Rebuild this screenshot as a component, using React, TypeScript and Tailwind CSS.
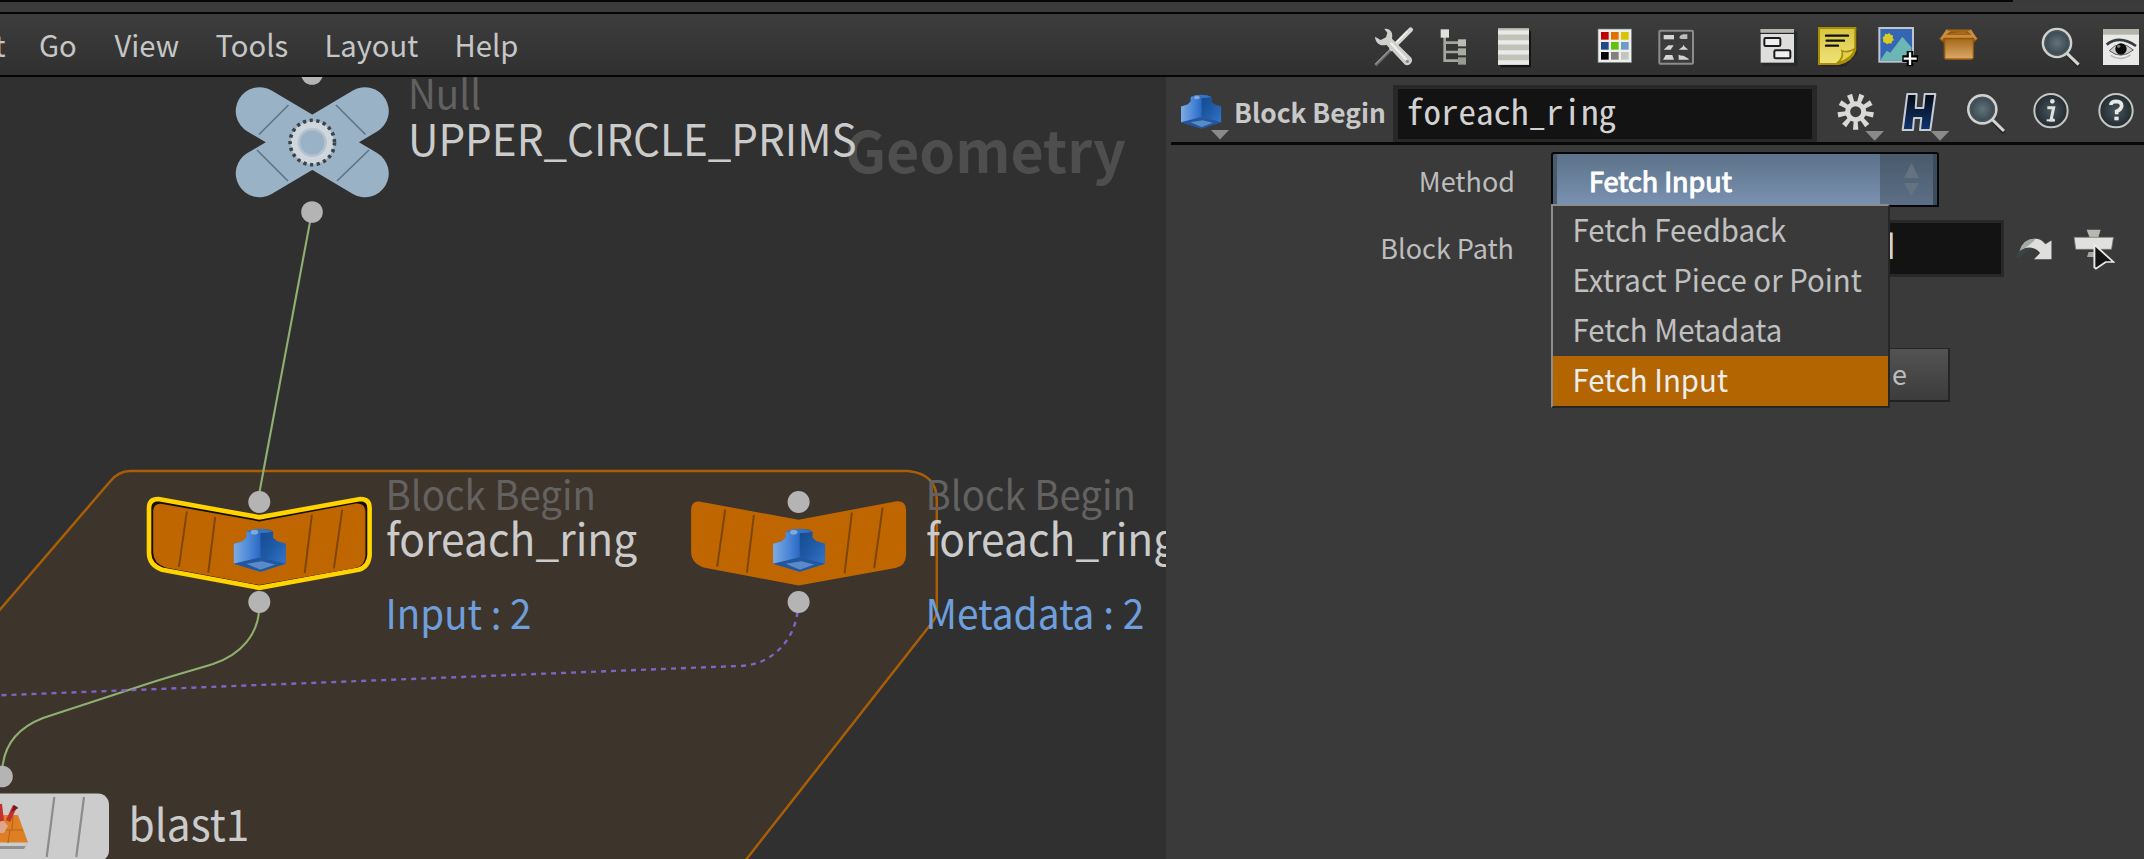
import React from "react";

const SANS = "font-['Noto_Sans_CJK_SC','Noto_Sans',sans-serif]";

/* ---------- toolbar icons ---------- */

type IconProps = { box: string; className: string; children: React.ReactNode };

function Icon({ box, className, children }: IconProps) {
  return (
    <svg viewBox={box} className={`shrink-0 overflow-visible ${className}`}>
      {children}
    </svg>
  );
}

function ToolsIcon() {
  return (
    <Icon box="66 75 129 132" className="h-[44px] w-[43px]">
      <path d="M76 196 L132 140" stroke="#666" strokeWidth="9" />
      <path d="M76 193 L132 137" stroke="#94948f" strokeWidth="4" />
      <path d="M125 146 L182 89" stroke="#d6d6d2" strokeWidth="14" strokeLinecap="round" />
      <path d="M128 139 L172 94" stroke="#f2f2f0" strokeWidth="4" />
      <path
        d="M103 87 C120 84 130 98 126 116 L184 173 C191 186 178 200 165 194 L109 134 C92 140 76 130 75 110 L92 120 L108 112 L112 98 Z"
        fill="#cfcfcb"
      />
      <path d="M122 128 L170 180" stroke="#efefec" strokeWidth="7" />
      <circle cx="172" cy="184" r="5" fill="#8a8a86" />
    </Icon>
  );
}

function TreeIcon() {
  return (
    <Icon box="264 75 93 132" className="h-[44px] w-[31px]">
      <path d="M284 108 V182 H326 M284 128 H326 M284 156 H326" fill="none" stroke="#a3a89c" strokeWidth="8" />
      <rect x="272" y="88" width="25" height="25" fill="#e0e2dd" />
      <rect x="324" y="118" width="24" height="21" fill="#b9bdb4" />
      <rect x="324" y="145" width="24" height="21" fill="#a7aba2" />
      <rect x="324" y="172" width="24" height="22" fill="#969a91" />
    </Icon>
  );
}

function ListIcon() {
  return (
    <Icon box="438 75 108 132" className="h-[44px] w-[36px]">
      <path d="M452 92 H543 V202 H452 Z" fill="#151515" />
      <rect x="444" y="86" width="93" height="109" fill="#c1c3b8" />
      <path d="M444 97 H537 M444 127 H537 M444 157 H537 M444 187 H537" stroke="#eaebe8" strokeWidth="15" transform="translate(0 -1)" />
      <path d="M444 90 H537 M444 119 H537 M444 149 H537 M444 179 H537" stroke="#c1c3b8" strokeWidth="7" transform="translate(0 -2)" />
    </Icon>
  );
}

function PaletteIcon() {
  const colors = ["#c00000", "#e07000", "#d9c400", "#204a87", "#62c010", "#6f9bc8", "#000000", "#80837d", "#c3c6bd"];
  return (
    <Icon box="741 75 108 132" className="h-[44px] w-[36px]">
      <rect x="744" y="87" width="101" height="101" fill="#eeeeec" stroke="#6b7c80" strokeWidth="2" />
      {colors.map((c, i) => (
        <rect key={c} x={753 + (i % 3) * 30} y={96 + Math.floor(i / 3) * 30} width="23" height="23" fill={c} />
      ))}
    </Icon>
  );
}

function ShapesIcon() {
  return (
    <Icon box="921 75 114 132" className="h-[44px] w-[38px]">
      <rect x="928" y="92" width="101" height="99" fill="#3b3b3b" stroke="#8c8c8c" strokeWidth="6" rx="3" />
      <rect x="941" y="105" width="31" height="13" fill="#d5d5d3" />
      <path d="M988 111 q4 -9 14 -8 h10 v14 h-18 q-6 0 -6 -6z" fill="#bdbdbb" />
      <path d="M941 149 l14 -13 h16 l-9 13z" fill="#d5d5d3" />
      <path d="M986 149 l12 -9 2 -6 4 6 11 9z" fill="#d5d5d3" />
      <path d="M939 179 l8 -14 h20 l5 14z" fill="#d5d5d3" />
      <path d="M986 179 v-15 q8 4 14 3 l16 9 v3z" fill="#d5d5d3" />
    </Icon>
  );
}

function NetBoxIcon() {
  return (
    <Icon box="57 75 120 132" className="h-[44px] w-[40px]">
      <rect x="68" y="94" width="104" height="103" fill="#252b2b" />
      <rect x="62" y="87" width="100" height="101" fill="#dededd" />
      <rect x="62" y="87" width="100" height="11" fill="#b4b7ae" />
      <path d="M60 100 H164" stroke="#20262a" strokeWidth="4" />
      <g fill="#efefef" stroke="#1c1c1c" strokeWidth="6">
        <rect x="73" y="114" width="48" height="24" rx="4" />
        <rect x="103" y="151" width="48" height="24" rx="4" />
      </g>
    </Icon>
  );
}

function NoteIcon() {
  return (
    <Icon box="231 75 123 132" className="h-[44px] w-[41px]">
      <defs>
        <linearGradient id="note" x1="0" y1="0" x2="0" y2="1">
          <stop offset="0" stopColor="#d8c53c" />
          <stop offset="1" stopColor="#f0e27c" />
        </linearGradient>
      </defs>
      <path d="M244 92 H352 V160 L316 200 H244Z" fill="#222" opacity=".7" />
      <path d="M237 84 H346 V150 Q338 182 296 192 H237Z" fill="url(#note)" stroke="#a68d08" strokeWidth="6" />
      <path d="M290 190 Q312 176 306 152 Q324 160 344 146 Q338 176 290 190Z" fill="#e3d04c" stroke="#a68d08" strokeWidth="5" />
      <path d="M258 107 H324 M260 122 H312 M258 137 H294" stroke="#111" strokeWidth="7" strokeLinecap="round" />
    </Icon>
  );
}

function ImageIcon() {
  return (
    <Icon box="411 75 129 132" className="h-[44px] w-[43px]">
      <rect x="418" y="84" width="101" height="101" fill="#3566b4" stroke="#bfc5cf" strokeWidth="6" />
      <path d="M423 178 L440 152 L451 158 L487 110 L514 142 V182 H423Z" fill="#6cb6b4" />
      <path d="M428 112 l6 -4 1 -7 7 2 6 -4 4 6 7 1 -1 8 4 6 -6 4 -2 7 -7 -1 -6 3 -5 -5 -7 -2 1 -7z" fill="#dccb22" />
      <path d="M510 153 V199 M487 176 H534" stroke="#000" strokeWidth="20" />
      <path d="M510 157 V195 M491 176 H530" stroke="#fff" strokeWidth="7" />
    </Icon>
  );
}

function CrateIcon() {
  return (
    <Icon box="594 75 126 132" className="h-[44px] w-[42px]">
      <defs>
        <linearGradient id="crate" x1="0" y1="0" x2="0" y2="1">
          <stop offset="0" stopColor="#a86c1c" />
          <stop offset="1" stopColor="#d9a766" />
        </linearGradient>
      </defs>
      <path d="M622 88 H690 L714 116 L702 128 V172 Q700 180 690 180 H622 Q612 180 611 172 V128 L597 117Z" fill="#8f5810" />
      <path d="M625 92 H687 L706 113 H606Z" fill="#cf8c38" />
      <path d="M632 94 H682 L694 104 H618Z" fill="#8c5510" />
      <path d="M636 99 L672 94 L690 103 H626Z" fill="#a56a20" />
      <rect x="616" y="118" width="82" height="57" fill="url(#crate)" />
      <path d="M622 90 L604 118 M690 90 L708 118" stroke="#c88c42" strokeWidth="7" />
    </Icon>
  );
}

function MagnifierArt({ id, x, y }: { id: string; x: number; y: number }) {
  return (
    <g transform={`translate(${x} ${y})`}>
      <defs>
        <radialGradient id={id}>
          <stop offset="0" stopColor="#62737c" />
          <stop offset="1" stopColor="#34414a" />
        </radialGradient>
      </defs>
      <path d="M32 36 L66 70" stroke="#262626" strokeWidth="13" />
      <path d="M30 31 L65 65" stroke="#d4d4d2" strokeWidth="9" />
      <circle r="42" fill={`url(#${id})`} stroke="#d0d1cf" strokeWidth="8" />
      <circle r="36" fill="none" stroke="#4a565d" strokeWidth="4" />
    </g>
  );
}

function EyeIcon() {
  return (
    <Icon box="1083 75 120 132" className="h-[44px] w-[40px]">
      <rect x="1089" y="87" width="108" height="108" fill="#e9e9e8" />
      <rect x="1089" y="87" width="108" height="17" fill="#b4b5ab" />
      <path d="M1100 134 Q1138 104 1188 138" fill="none" stroke="#333b40" strokeWidth="8" />
      <path d="M1108 152 Q1140 114 1180 150 Q1142 180 1108 152Z" fill="#c9caca" stroke="#5c6063" strokeWidth="3" />
      <circle cx="1143" cy="147" r="17" fill="#0b0b0b" />
      <circle cx="1136" cy="139" r="5" fill="#777" />
      <path d="M1112 166 Q1142 186 1172 164" fill="none" stroke="#b5b5b5" strokeWidth="4" />
    </Icon>
  );
}

/* ---------- parameter header icons ---------- */

function GearIcon() {
  return (
    <Icon box="285 270 150 153" className="h-[51px] w-[50px]">
      <g transform="translate(347 332)">
        {[0, 1, 2, 3, 4, 5, 6, 7, 8].map((i) => (
          <path key={i} d="M-6 -28 L-8 -54 H8 L6 -28Z" fill="#d9d9d6" transform={`rotate(${i * 40 + 20})`} />
        ))}
        <circle r="24" fill="#3c3c3c" stroke="#d9d9d6" strokeWidth="15" />
      </g>
      <path d="M376 390 H432 L404 419Z" fill="#8a8a8a" />
    </Icon>
  );
}

function HoudiniIcon() {
  return (
    <Icon box="480 270 150 153" className="h-[51px] w-[50px]">
      <defs>
        <linearGradient id="hmark" x1="0" y1="0" x2="0" y2="1">
          <stop offset="0" stopColor="#050b14" />
          <stop offset="1" stopColor="#10356f" />
        </linearGradient>
      </defs>
      <path
        d="M502 279 H530 L527 321 H550 L554 279 H586 L571 387 H540 L544 351 H522 L519 387 H488 Z"
        fill="url(#hmark)"
        stroke="#c6ccd3"
        strokeWidth="6"
        strokeLinejoin="round"
      />
      <path d="M572 390 H628 L600 419Z" fill="#8a8a8a" />
    </Icon>
  );
}

function RoundBadge({ cx, id, children }: { cx: number; id: string; children: React.ReactNode }) {
  return (
    <Icon box={`${cx - 57} 270 114 153`} className="h-[51px] w-[38px]">
      <defs>
        <radialGradient id={id}>
          <stop offset="0" stopColor="#46555e" />
          <stop offset="1" stopColor="#222b30" />
        </radialGradient>
      </defs>
      <circle cx={cx} cy="329" r="50" fill={`url(#${id})`} stroke="#c4c6c2" strokeWidth="6" />
      {children}
    </Icon>
  );
}

/* Blue block, drawn in a 156 x 130 space */
function BlockArt() {
  return (
    <g>
      <path d="M0 46 L26 38 L38 26 V10 Q80 -8 118 10 V28 L130 38 L156 46 V106 L80 130 L0 106Z" fill="#2f6dc0" />
      <path d="M0 46 L26 38 L38 26 V10 Q58 0 80 2 V90 L0 106Z" fill="url(#blockL)" />
      <path d="M80 2 Q105 0 118 10 V28 L130 38 L156 46 V106 L80 86Z" fill="url(#blockR)" />
      <path d="M38 10 Q80 -8 118 10 Q80 18 38 10Z" fill="#3474c0" />
      <ellipse cx="62" cy="11" rx="11" ry="7" fill="#a9cdf0" opacity=".6" />
      <path d="M0 106 L80 86 L156 106 L80 130Z" fill="#22579f" />
      <path d="M38 106 L84 98 L124 108 L80 124Z" fill="#6d9bd4" opacity=".75" />
    </g>
  );
}

function BlockIcon() {
  return (
    <svg viewBox="1180 93 50 49" className="ml-[14px] h-[49px] w-[50px] shrink-0">
      <g transform="translate(1181 94.5) scale(.257 .262)">
        <BlockArt />
      </g>
      <path d="M1211 130 H1229 L1220 139.5Z" fill="#8a8a8a" />
    </svg>
  );
}

/* ---------- node graph ---------- */

function BlockNode({ cx, selected }: { cx: number; selected?: boolean }) {
  const body =
    "M-99.5 501.5 L0 519.8 L98 501.2 Q107.5 500.5 107.5 510 V555 Q107 566 97 568 L0 585.5 L-95 567.5 Q-107.5 563 -107.5 552 V510 Q-107.5 501 -99.5 501.5Z";
  const ring =
    "M-101 499 L0 517.3 L101 499 Q110.3 499 110.3 508 V555 Q109.5 567 99 569.8 L0 587.8 L-97 569.8 Q-110.3 565 -110.3 553 V508 Q-110.3 499 -101 499Z";
  return (
    <g transform={`translate(${cx} 0)`}>
      {selected && <path d={ring} fill="#140e04" stroke="#ffd400" strokeWidth="4.6" />}
      <g transform={selected ? "translate(0 543.7) scale(.987 .968) translate(0 -542.8)" : undefined}>
        <path d={body} fill="#c06600" />
        <path
          d="M-73.4 509.3 L-81.4 566.7 M-44.7 515 L-51.7 572.7 M53.3 512.7 L46 573.3 M84 507.7 L75.6 568.3"
          stroke="#7d4605"
          strokeWidth="2"
        />
      </g>
      <g transform="translate(-25.5 528.5) scale(.333)">
        <BlockArt />
      </g>
      <circle cy="502" r="11" fill="#b4b4b4" />
      <circle cy="602" r="11" fill="#b4b4b4" />
    </g>
  );
}

function Graph() {
  return (
    <section className={`relative w-[1166px] shrink-0 overflow-hidden bg-[#303030] leading-none ${SANS}`}>
      <svg viewBox="0 77 1166 782" className="block h-[782px] w-[1166px]">
        <defs>
          <linearGradient id="blockL" x1="0" y1=".5" x2="1" y2=".5">
            <stop offset="0" stopColor="#7fabe2" />
            <stop offset=".6" stopColor="#4a86d6" />
            <stop offset="1" stopColor="#2a68c4" />
          </linearGradient>
          <linearGradient id="blockR" x1="0" y1="0" x2="1" y2="1">
            <stop offset="0" stopColor="#154a8c" />
            <stop offset=".5" stopColor="#1f5aa6" />
            <stop offset="1" stopColor="#3474c8" />
          </linearGradient>
        </defs>
        <path
          d="M-20 633 L110.5 481 Q119 471 130 471 H908 Q936.8 474 936.8 500 V612 Q936.5 618 929 626.5 L745 861 H-20Z"
          fill="#3d342b"
          stroke="#a95e06"
          strokeWidth="2.5"
        />
        <g fill="none" stroke="#8fb070" strokeWidth="2.1">
          <path d="M310 222 L259.5 492" />
          <path d="M259 612 C257 633 243 654 213 664 C190 671 170 676.5 150 683 L43 718 C20 727 5 742 2.5 767" />
        </g>
        <path d="M797.5 612 C794 640 772 666 738 666 L0 695.3" fill="none" stroke="#8461c2" strokeWidth="2.4" strokeDasharray="5 5" />

        <circle cx="312" cy="74" r="10.8" fill="#b4b4b4" />
        <g stroke="#9ab2c6" strokeWidth="47.5" strokeLinecap="round">
          <path d="M259.5 111 L365 173.5" />
          <path d="M365 111 L259.5 173.5" />
        </g>
        <path
          d="M288.5 105 L259 134.5 M257 150 L288 181 M336 105 L365.5 134.5 M369 150 L337 181"
          stroke="#5f7385"
          strokeWidth="1.6"
        />
        <circle cx="312.3" cy="142.5" r="17.5" fill="none" stroke="#cfd6dc" strokeWidth="8" />
        <circle cx="312.3" cy="142.5" r="13.3" fill="none" stroke="#b2c2d0" strokeWidth="2.5" />
        <circle cx="312.3" cy="142.5" r="22.2" fill="none" stroke="#3b434a" strokeWidth="3.6" strokeDasharray="3.2 3.55" />
        <circle cx="312" cy="212" r="10.8" fill="#b4b4b4" />

        <BlockNode cx={259.3} selected />
        <BlockNode cx={798.6} />

        <circle cx="2" cy="776.5" r="10.8" fill="#b4b4b4" />
        <rect x="-120" y="793.5" width="229" height="68" rx="11" fill="#cccccc" />
        <path d="M54.3 797 L46.7 857 M84 797 L76.3 857" stroke="#8c8c8c" strokeWidth="2.2" />
        <path d="M0 846 H26 L28 842 L24 849 H0Z" fill="#909090" />
        <path d="M-8 815 H18 L28 842.5 H-18Z" fill="#dd7f22" />
        <path d="M0 830 H23 M8 843 L10 830 M12 830 L13 816" stroke="#b8661a" strokeWidth="1.2" />
        <path d="M-4 825 L3 820 L8 826 L4 833 H-4Z" fill="#dba98a" />
        <path d="M8 821 L15 806" stroke="#c43030" strokeWidth="4.5" />
        <path d="M11 812 L14 805 L18.5 808Z" fill="#7c1818" />
        <path d="M2 821 L0 804" stroke="#c43030" strokeWidth="4" />
      </svg>

      <span className="absolute top-[43px] left-[845px] text-[57.3px] font-bold whitespace-nowrap text-[#4e4e4e]">Geometry</span>
      <span className="absolute top-[-4px] left-[408px] origin-[0_93%] scale-y-[1.05] text-[38.5px] text-[#616161]">Null</span>
      <span className="absolute top-[40px] left-[408px] origin-[0_93%] scale-y-[1.03] text-[42.2px] whitespace-nowrap text-[#cbcbcb]">UPPER_CIRCLE_PRIMS</span>

      <span className="absolute top-[397px] left-[385.5px] origin-[0_93%] scale-y-[1.05] text-[38.4px] whitespace-nowrap text-[#646260]">Block Begin</span>
      <span className="absolute top-[440px] left-[386px] origin-[0_93%] scale-y-[1.03] text-[42.5px] whitespace-nowrap text-[#cbcbcb]">foreach_ring</span>
      <span className="absolute top-[516px] left-[385.5px] origin-[0_93%] scale-y-[1.05] text-[38.5px] whitespace-nowrap text-[#6e9fdc]">Input : 2</span>

      <span className="absolute top-[397px] left-[925.5px] origin-[0_93%] scale-y-[1.05] text-[38.4px] whitespace-nowrap text-[#646260]">Block Begin</span>
      <span className="absolute top-[440px] left-[926px] origin-[0_93%] scale-y-[1.03] text-[42.5px] whitespace-nowrap text-[#cbcbcb]">foreach_ring</span>
      <span className="absolute top-[516px] left-[925.5px] origin-[0_93%] scale-y-[1.05] text-[38.8px] whitespace-nowrap text-[#6e9fdc]">Metadata : 2</span>

      <span className="absolute top-[725px] left-[128.5px] origin-[0_93%] scale-y-[1.03] text-[42.5px] whitespace-nowrap text-[#cbcbcb]">blast1</span>
    </section>
  );
}

/* ---------- parameter pane ---------- */

function ParamHeader() {
  return (
    <header className="flex h-[65px] items-end">
      <BlockIcon />
      <span className="mb-[15px] ml-[4px] w-[159px] text-[26.3px] leading-[30px] font-bold whitespace-nowrap text-[#c8c8c8]">
        Block Begin
      </span>
      <div className="h-[57px] w-[424px] border-x-[5px] border-t-[4px] border-b-[3px] border-[#282828] bg-[#131313] pl-[8px] font-['Noto_Sans_Mono_CJK_SC','DejaVu_Sans_Mono',monospace] text-[35px] leading-[42px] whitespace-nowrap text-[#d2d2d2]">
        foreach_ring
      </div>
      <div className="ml-auto flex pr-[9px]">
        <GearIcon />
        <div className="ml-[15px] flex">
          <HoudiniIcon />
        </div>
        <div className="ml-[15px] flex">
          <Icon box="675 270 123 153" className="h-[51px] w-[41px]">
            <MagnifierArt id="mag2" x={727} y={325} />
          </Icon>
        </div>
        <div className="ml-[26px] flex">
          <RoundBadge cx={933} id="info">
            <circle cx="937" cy="301" r="7" fill="#e2e2df" />
            <path d="M922 320 H941 L933 357 H943" fill="none" stroke="#e2e2df" strokeWidth="9" />
            <path d="M920 358 H945" stroke="#e2e2df" strokeWidth="6" />
          </RoundBadge>
        </div>
        <div className="ml-[27px] flex">
          <RoundBadge cx={1128} id="help">
            <path d="M1112 312 Q1114 301 1129 301 Q1145 302 1145 315 Q1144 325 1130 331 V340" fill="none" stroke="#e8e8e6" strokeWidth="11" />
            <rect x="1123" y="347" width="13" height="11" fill="#e8e8e6" />
          </RoundBadge>
        </div>
      </div>
    </header>
  );
}

function MethodMenu() {
  const items = ["Fetch Feedback", "Extract Piece or Point", "Fetch Metadata", "Fetch Input"];
  return (
    <ul className="absolute top-[52px] left-0 z-10 w-[339px] border-t-[2.5px] border-r-2 border-b-2 border-l-[2.5px] border-t-[#8c8c8c] border-r-[#262626] border-b-[#262626] border-l-[#8c8c8c] bg-[#3a3a3a] text-[29.4px]">
      {items.map((item) => (
        <li
          key={item}
          className={`h-[50px] pl-[19.5px] leading-[46px] whitespace-nowrap ${
            item === "Fetch Input" ? "bg-[#b26500] text-[#ededed]" : "text-[#c0c0c0]"
          }`}
        >
          <span className="inline-block origin-[0_73%] scale-y-[1.05]">{item}</span>
        </li>
      ))}
    </ul>
  );
}

function Params() {
  return (
    <div className="grid grid-cols-[385px_1fr] text-[27px] text-[#bdbdbd]">
      <label className="mt-[7px] h-[55px] pr-[36px] text-right leading-[58px]">Method</label>
      <div className="relative mt-[7px] h-[55px] w-[388px]">
        <div className="flex h-full rounded-t-[3px] border-2 border-[#060708] bg-[#4a5b6d]">
          <div className="ml-[4px] w-[323px] bg-linear-to-b from-[#5c7289] to-[#7a92b1] pl-[32px] leading-[53px] text-white [-webkit-text-stroke:1.1px_white]">
            Fetch Input
          </div>
          <div className="flex flex-1 items-center border-r-[4px] border-[#3c4c5d] bg-linear-to-b from-[#495a6c] to-[#5c6f86] pl-[24px]">
            <svg viewBox="0 0 15 34" className="h-[34px] w-[15px]" fill="#65727f">
              <path d="M0 15 L7.5 0 L15 15Z M0 20 H15 L7.5 33Z" />
            </svg>
          </div>
        </div>
        <MethodMenu />
      </div>

      <label className="mt-[13px] h-[57px] pr-[37px] text-right leading-[55px]">Block Path</label>
      <div className="mt-[13px] flex h-[57px] items-center">
        <div className="flex h-[57px] w-[453px] justify-end border-[3px] border-[#282828] bg-[#131313] pr-[102px] font-['Noto_Sans_Mono_CJK_SC','DejaVu_Sans_Mono',monospace] text-[35px] leading-[42px] text-[#d2d2d2]">
          <span className="-mr-px pr-[5px]">d</span>
        </div>
        <svg viewBox="1232 292 100 76" className="ml-[11px] h-[26px] w-[38px]" preserveAspectRatio="none">
          <path d="M1236 352 Q1250 298 1296 298 L1312 312 L1328 305 V360 H1282 L1298 344 Q1278 314 1252 348 Q1240 362 1236 352Z" fill="#3a4444" />
          <path d="M1246 332 Q1256 300 1286 300 Q1300 300 1312 316 L1328 305 V360 H1282 L1298 342 Q1280 316 1246 332Z" fill="#dededd" />
          <path d="M1244 336 Q1252 300 1286 300 Q1276 318 1244 336Z" fill="#a7a9a6" />
        </svg>
        <svg viewBox="1384 258 108 126" className="ml-[20px] h-[42px] w-[42px]" preserveAspectRatio="none">
          <path d="M1419 263 H1455 L1449 287 H1427Z" fill="#b5b8ae" />
          <path d="M1420 345 L1424 330 H1450 V345Z" fill="#a5a8a0" />
          <path d="M1387 286 H1488 L1483 322 H1391Z" fill="#e0e0de" stroke="#77796f" strokeWidth="2" />
          <path d="M1439 308 L1488 360 H1468 L1443 380 L1439 376Z" fill="#141414" stroke="#e8e8e8" strokeWidth="5" />
        </svg>
      </div>

      <span />
      <div className="mt-[71px] flex h-[54px] w-[399px] justify-end border-t border-r-2 border-b-2 border-t-[#252525] border-r-[#252525] border-b-[#202020] bg-linear-to-b from-[#535353] to-[#3c3c3c] pr-[41px] leading-[50px]">
        e
      </div>
    </div>
  );
}

/* ---------- menu bar ---------- */

function MenuBar() {
  return (
    <nav className="flex h-[61px] items-center bg-linear-to-b from-[#3d3d3d] to-[#303030]">
      <div className="flex origin-[0_68%] scale-y-[1.03] text-[29.2px] leading-[53px] text-[#c6c6c6]">
        <span className="flex w-[39px] overflow-hidden">
          <span className="-ml-[48.5px]">Edit</span>
        </span>
        <span className="w-[75.5px]">Go</span>
        <span className="w-[101px]">View</span>
        <span className="w-[109px]">Tools</span>
        <span className="w-[130px]">Layout</span>
        <span>Help</span>
      </div>
      <div className="ml-auto flex h-full items-start pt-[11px] pr-[3px]">
        <div className="flex gap-[23px]">
          <ToolsIcon />
          <TreeIcon />
        </div>
        <div className="ml-[27px] flex">
          <ListIcon />
        </div>
        <div className="ml-[65px] flex gap-[24px]">
          <PaletteIcon />
          <ShapesIcon />
        </div>
        <div className="ml-[64px] flex gap-[18.3px]">
          <NetBoxIcon />
          <NoteIcon />
          <ImageIcon />
          <CrateIcon />
        </div>
        <div className="ml-[60px] flex gap-[20px]">
          <Icon box="900 75 123 132" className="h-[44px] w-[41px]">
            <MagnifierArt id="mag1" x={951} y={129} />
          </Icon>
          <EyeIcon />
        </div>
      </div>
    </nav>
  );
}

export default function App() {
  return (
    <div className={`flex h-[859px] w-[2144px] flex-col overflow-hidden bg-[#3a3a3a] ${SANS}`}>
      <div className="h-[2px] w-[2013px] bg-[#060606]" />
      <div className="h-[10px] bg-[#3b3b3b]" />
      <div className="h-[2px] bg-[#050505]" />
      <MenuBar />
      <div className="h-[2px] bg-[#050505]" />
      <main className="flex h-[782px]">
        <Graph />
        <aside className="flex-1 bg-[#3a3a3a]">
          <ParamHeader />
          <div className="ml-[5px] h-[3px] bg-[#080808]" />
          <Params />
        </aside>
      </main>
    </div>
  );
}
